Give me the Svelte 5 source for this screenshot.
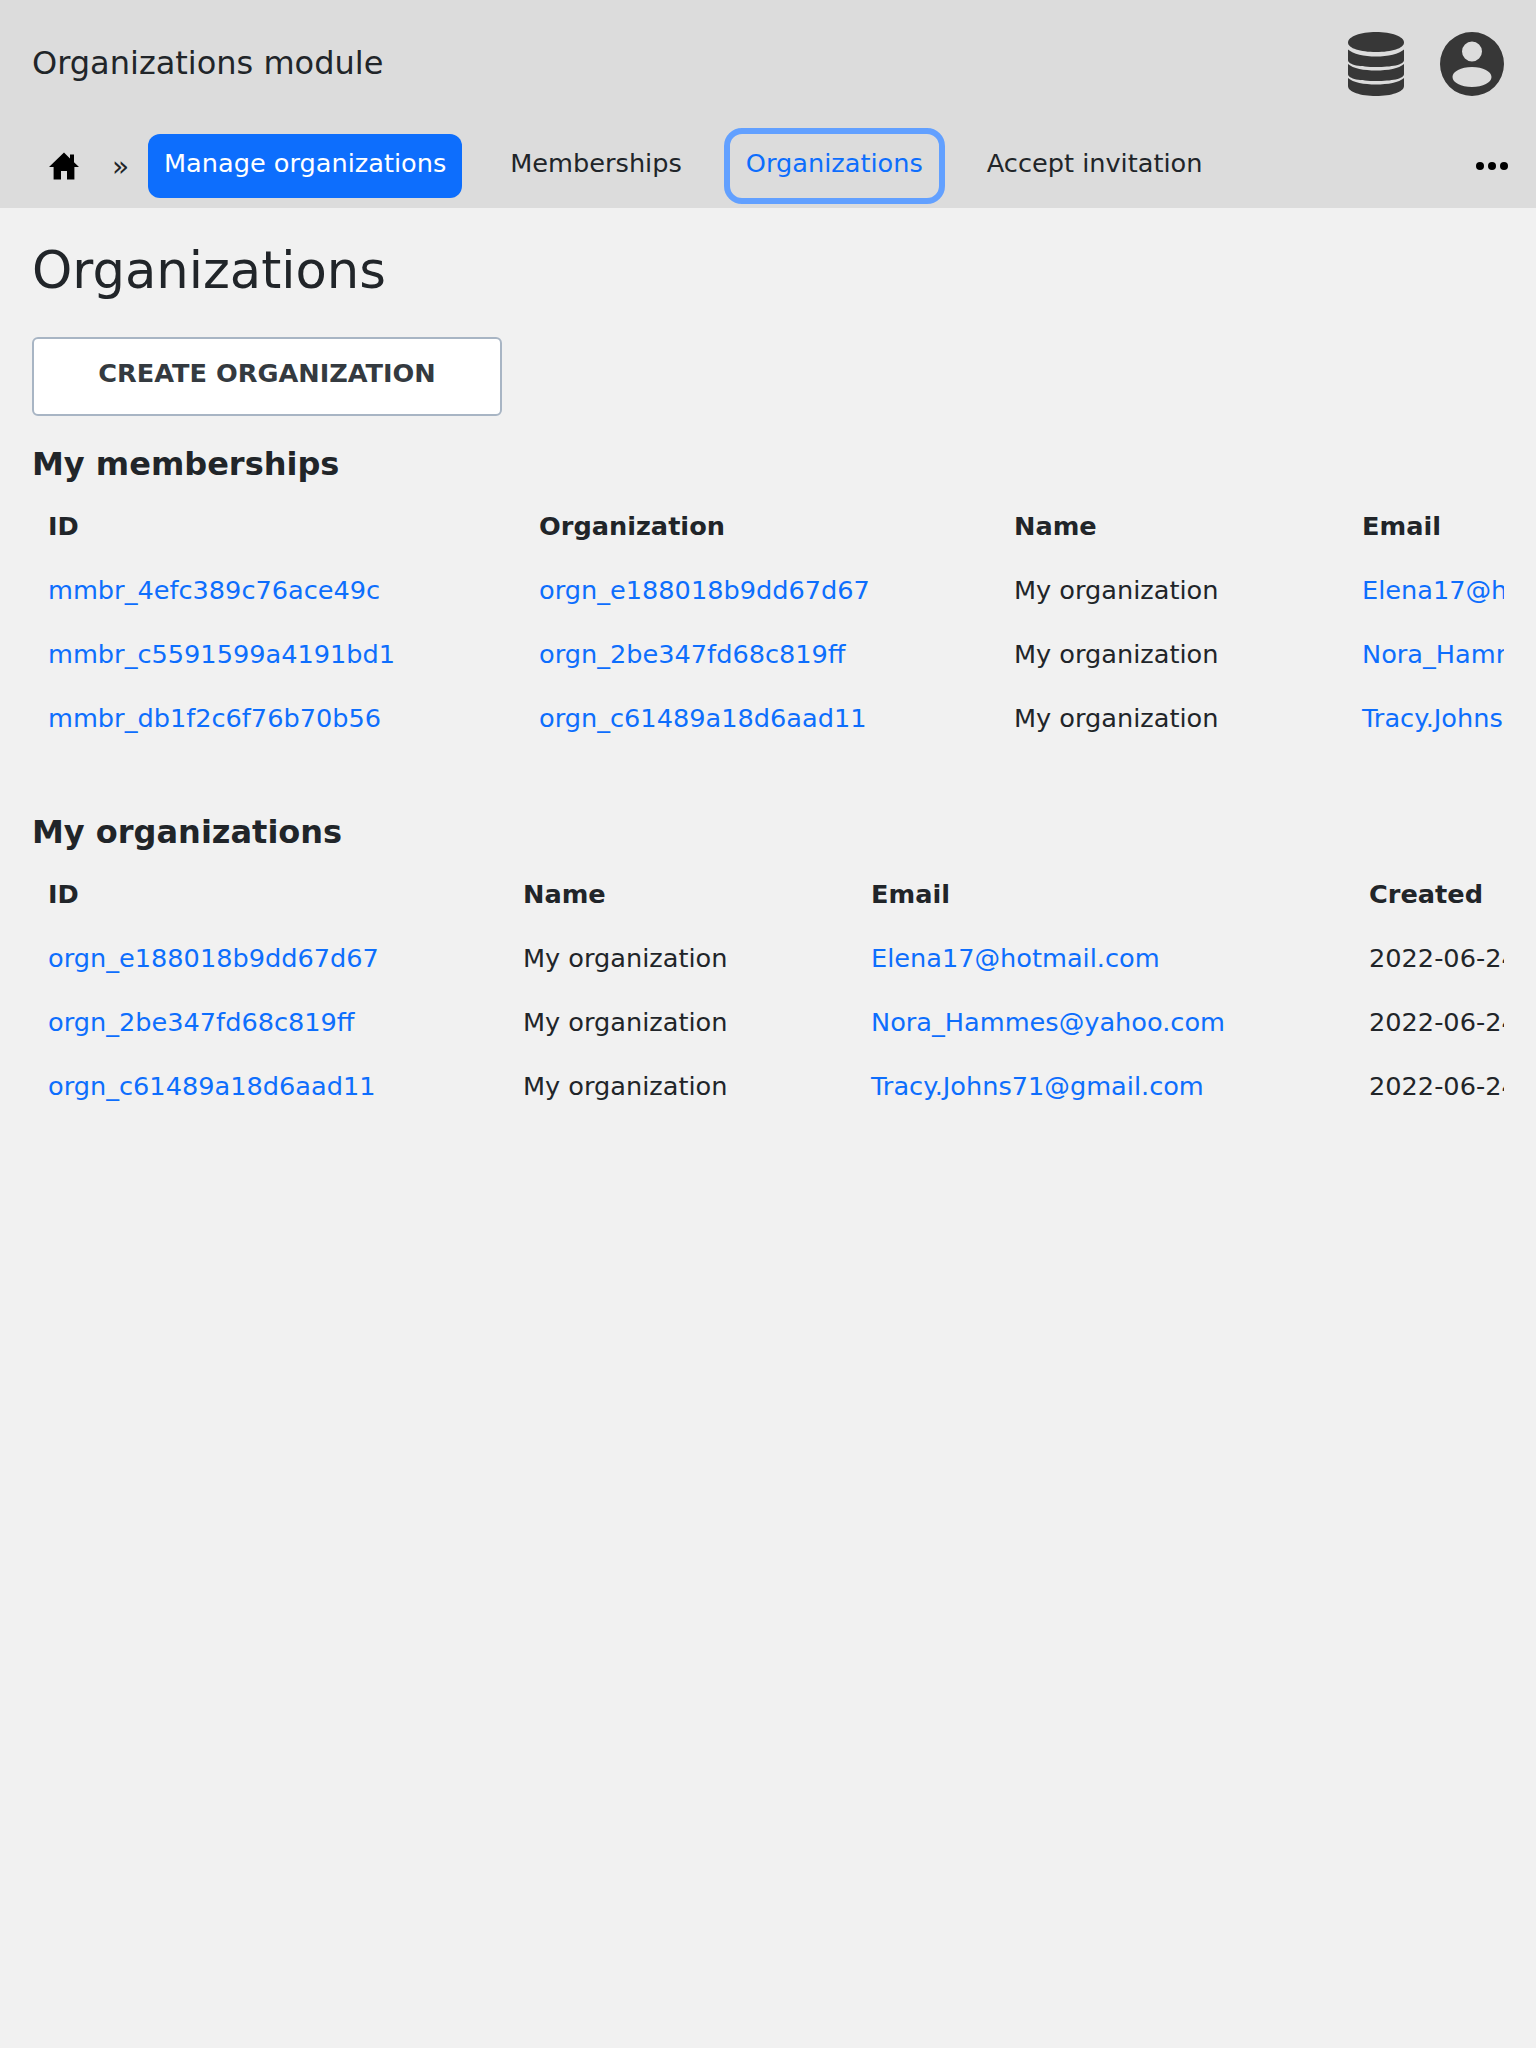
<script>
  const tabs = [
    { label: "Manage organizations", kind: "active" },
    { label: "Memberships", kind: "" },
    { label: "Organizations", kind: "focus" },
    { label: "Accept invitation", kind: "" }
  ];

  const memberships = [
    ["mmbr_4efc389c76ace49c", "orgn_e188018b9dd67d67", "My organization", "Elena17@hotmail.com"],
    ["mmbr_c5591599a4191bd1", "orgn_2be347fd68c819ff", "My organization", "Nora_Hammes@yahoo.com"],
    ["mmbr_db1f2c6f76b70b56", "orgn_c61489a18d6aad11", "My organization", "Tracy.Johns71@gmail.com"]
  ];

  const organizations = [
    ["orgn_e188018b9dd67d67", "My organization", "Elena17@hotmail.com", "2022-06-24"],
    ["orgn_2be347fd68c819ff", "My organization", "Nora_Hammes@yahoo.com", "2022-06-24"],
    ["orgn_c61489a18d6aad11", "My organization", "Tracy.Johns71@gmail.com", "2022-06-24"]
  ];
</script>

<header class="top">
  <div class="brand-row">
    <span class="brand">Organizations module</span>
    <div class="top-icons">
      <svg class="db" viewBox="0 0 56 64" aria-hidden="true">
        <path d="M28 0C12.5 0 0 4.5 0 10.5S12.500 20 28 20s28-3.500 28-9.500S43.500 0 28 0z" />
        <path d="M0 17.500C5 22 16 24.500 28 24.500S51 22 56 17.500V28C56 33 43.500 35 28 35S0 33 0 28z" />
        <path d="M0 32C5 36.500 16 38.500 28 38.500S51 36.500 56 32V42C56 47 43.500 49 28 49S0 47 0 42z" />
        <path d="M0 46C5 50.500 16 52.500 28 52.500S51 50.500 56 46V54C56 60 43.500 64 28 64S0 60 0 54z" />
      </svg>
      <svg class="user" viewBox="0 0 64 64" aria-hidden="true">
        <path fill-rule="evenodd" d="M32 0a32 32 0 1 0 0 64a32 32 0 0 0 0-64zM32 9.500a10 10 0 1 1 0 20a10 10 0 0 1 0-20zM32 35c11 0 19.500 4.500 19.500 10S43 55 32 55S12.500 50.500 12.500 45S21 35 32 35z" />
      </svg>
    </div>
  </div>
  <nav class="tabs">
    <svg class="home" viewBox="0 0 16 16" aria-hidden="true">
      <path d="M8 1.200 0.500 8.500h2.300v6.300h3.700v-4.300h3v4.300h3.700V8.500h2.300L13 6.100V2.300h-2v1.900z" />
    </svg>
    <span class="crumb">»</span>
    {#each tabs as tab}
      <span class="tab {tab.kind}">{tab.label}</span>
    {/each}
    <span class="more"><i></i><i></i><i></i></span>
  </nav>
</header>

<main class="page">
  <h1>Organizations</h1>
  <button class="create">CREATE ORGANIZATION</button>

  <h2 class="first">My memberships</h2>
  <div class="table-wrap">
    <table class="members">
      <colgroup><col class="c1" /><col class="c2" /><col class="c3" /><col class="c4" /></colgroup>
      <thead>
        <tr><th>ID</th><th>Organization</th><th>Name</th><th>Email</th></tr>
      </thead>
      <tbody>
        {#each memberships as row}
          <tr>
            <td><a href="#m">{row[0]}</a></td>
            <td><a href="#o">{row[1]}</a></td>
            <td>{row[2]}</td>
            <td><a href="#e">{row[3]}</a></td>
          </tr>
        {/each}
      </tbody>
    </table>
  </div>

  <h2 class="second">My organizations</h2>
  <div class="table-wrap">
    <table class="orgs">
      <colgroup><col class="c1" /><col class="c2" /><col class="c3" /><col class="c4" /></colgroup>
      <thead>
        <tr><th>ID</th><th>Name</th><th>Email</th><th>Created</th></tr>
      </thead>
      <tbody>
        {#each organizations as row}
          <tr>
            <td><a href="#o">{row[0]}</a></td>
            <td>{row[1]}</td>
            <td><a href="#e">{row[2]}</a></td>
            <td>{row[3]}</td>
          </tr>
        {/each}
      </tbody>
    </table>
  </div>
</main>

<style>
  :global(body) {
    background: #f1f1f1;
    color: #212529;
    font-family: "DejaVu Sans", sans-serif;
    font-size: 25.6px;
    min-height: 2048px;
  }

  .top {
    background: #dcdcdc;
    height: 208px;
    box-sizing: border-box;
    padding: 32px 32px 0;
  }

  .brand-row {
    display: flex;
    justify-content: space-between;
    align-items: center;
    height: 64px;
  }

  .brand {
    font-size: 32px;
    margin-top: -2px;
  }

  .top-icons {
    display: flex;
    gap: 36px;
    fill: #373737;
  }

  .db {
    width: 56px;
    height: 64px;
  }

  .user {
    width: 64px;
    height: 64px;
  }

  .tabs {
    display: flex;
    align-items: center;
    margin-top: 38px;
    height: 64px;
    position: relative;
  }

  .home {
    width: 32px;
    height: 32px;
    margin-left: 16px;
  }

  .crumb {
    margin-left: 32px;
    width: 36px;
    font-size: 28px;
  }

  .tab {
    padding: 0 16px;
    height: 64px;
    line-height: 58px;
    margin-right: 32px;
    box-sizing: border-box;
    border-radius: 12px;
    white-space: nowrap;
  }

  .tab.active {
    background: #0d6efd;
    color: #fff;
  }

  .tab.focus {
    color: #0d6efd;
    outline: 6px solid #62a0ff;
  }

  .more {
    margin-left: auto;
    margin-right: -4px;
    display: flex;
    gap: 4px;
  }

  .more i {
    width: 8px;
    height: 8px;
    border-radius: 50%;
    background: #000;
  }

  .page {
    padding: 0 32px;
  }

  h1 {
    margin: 0;
    padding-top: 30px;
    font-size: 51.2px;
    font-weight: 400;
    line-height: 64px;
  }

  .create {
    display: block;
    margin-top: 35px;
    width: 470px;
    height: 79px;
    padding: 0 0 8px;
    background: #fff;
    border: 2px solid #a8b5c4;
    border-radius: 6px;
    color: #343a40;
    font-family: inherit;
    font-size: 25.6px;
    font-weight: 700;
  }

  h2 {
    margin: 0;
    font-size: 32px;
    font-weight: 700;
    line-height: 40px;
  }

  h2.first {
    margin-top: 28px;
  }

  h2.second {
    margin-top: 62px;
  }

  .table-wrap {
    overflow: hidden;
    margin-top: 10px;
  }

  table {
    table-layout: fixed;
    border-collapse: collapse;
    width: 1700px;
  }

  th, td {
    height: 64px;
    padding: 0 16px;
    text-align: left;
    white-space: nowrap;
    overflow: hidden;
  }

  a {
    color: #0d6efd;
    text-decoration: none;
  }

  .members .c1 { width: 491px; }
  .members .c2 { width: 475px; }
  .members .c3 { width: 348px; }
  .members .c4 { width: 386px; }

  .orgs .c1 { width: 475px; }
  .orgs .c2 { width: 348px; }
  .orgs .c3 { width: 498px; }
  .orgs .c4 { width: 379px; }
</style>
